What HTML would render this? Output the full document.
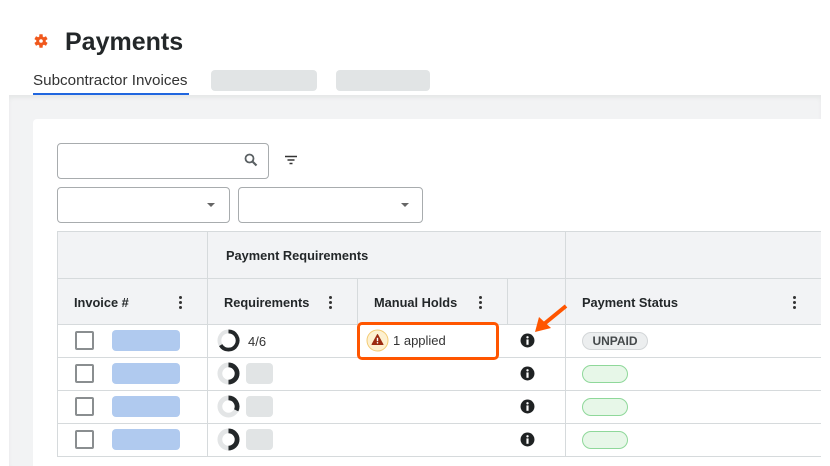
<!DOCTYPE html>
<html><head><style>
*{box-sizing:border-box;margin:0;padding:0}
body{width:830px;height:466px;overflow:hidden;background:#fff;font-family:"Liberation Sans",Arial,sans-serif;color:#232729;position:relative}
.a{position:absolute}
.hd{font-weight:bold;font-size:12.8px;color:#232729}
.dots{position:absolute;width:3px}
.dots i{display:block;width:3px;height:3px;border-radius:50%;background:#333;margin-bottom:2px}
.cb{position:absolute;width:19px;height:19px;border:2px solid #8a8e90;border-radius:2px;background:#fff}
.bp{position:absolute;width:68px;height:21px;background:#b0caef;border-radius:4px}
.gp{position:absolute;width:27px;height:21px;background:#e1e4e5;border-radius:4px}
.gr{position:absolute;width:46px;height:18px;background:#e7f7e8;border:1px solid #8fd89a;border-radius:9px}
.vl{position:absolute;width:1px;background:#d6dadc}
.hl{position:absolute;height:1px;background:#d6dadc}
</style></head><body>
<svg class="a" style="left:34px;top:34px" width="14" height="14" viewBox="0 0 14 14"><g fill="#f0581c"><circle cx="7" cy="7" r="4.8"/><rect x="5.3" y="0.3" width="3.4" height="13.4" rx=".5"/><rect x="5.3" y="0.3" width="3.4" height="13.4" rx=".5" transform="rotate(60 7 7)"/><rect x="5.3" y="0.3" width="3.4" height="13.4" rx=".5" transform="rotate(120 7 7)"/></g><circle cx="7" cy="7" r="1.8" fill="#fff"/></svg>
<div class="a" style="left:65px;top:28px;font-size:25px;font-weight:bold;color:#232729">Payments</div>
<div class="a" style="left:33px;top:72px;font-size:15.2px;color:#333">Subcontractor Invoices</div>
<div class="a" style="left:33px;top:93px;width:156px;height:2px;background:#2066df"></div>
<div class="a" style="left:211px;top:70px;width:106px;height:21px;background:#e1e4e5;border-radius:4px"></div>
<div class="a" style="left:336px;top:70px;width:94px;height:21px;background:#e1e4e5;border-radius:4px"></div>
<div class="a" style="left:9px;top:95px;width:812px;height:371px;background:#f2f3f4;box-shadow:inset 0 3px 4px rgba(0,0,0,.05)"></div>
<div class="a" style="left:33px;top:119px;width:788px;height:347px;background:#fff;border-radius:4px 0 0 0"></div>
<div class="a" style="left:57px;top:143px;width:212px;height:36px;border:1px solid #a8acae;border-radius:4px"></div>
<svg class="a" style="left:244px;top:153px" width="14" height="14" viewBox="0 0 14 14"><circle cx="5.5" cy="5.5" r="4" fill="none" stroke="#5a6063" stroke-width="1.8"/><path d="M8.5 8.5L12.5 12.5" stroke="#5a6063" stroke-width="2.2"/></svg>
<svg class="a" style="left:285px;top:155px" width="12" height="10" viewBox="0 0 12 10"><path d="M0 1.5h12M2.5 5h7M4.5 8.5h3" stroke="#333" stroke-width="1.5"/></svg>
<div class="a" style="left:57px;top:187px;width:173px;height:36px;border:1px solid #a8acae;border-radius:4px"></div>
<div class="a" style="left:207px;top:203px;border:4px solid transparent;border-top:4px solid #666;border-bottom:0;width:0"></div>
<div class="a" style="left:238px;top:187px;width:185px;height:36px;border:1px solid #a8acae;border-radius:4px"></div>
<div class="a" style="left:401px;top:203px;border:4px solid transparent;border-top:4px solid #666;border-bottom:0;width:0"></div>
<div class="a" style="left:57px;top:231px;width:764px;height:93px;background:#f2f3f5"></div>
<div class="hl" style="left:57px;top:231px;width:764px"></div>
<div class="hl" style="left:57px;top:278px;width:764px"></div>
<div class="hl" style="left:57px;top:324px;width:764px"></div>
<div class="hl" style="left:57px;top:357px;width:764px"></div>
<div class="hl" style="left:57px;top:390px;width:764px"></div>
<div class="hl" style="left:57px;top:423px;width:764px"></div>
<div class="hl" style="left:57px;top:456px;width:764px"></div>
<div class="vl" style="left:57px;top:231px;height:226px"></div>
<div class="vl" style="left:207px;top:231px;height:226px"></div>
<div class="vl" style="left:565px;top:231px;height:226px"></div>
<div class="vl" style="left:357px;top:278px;height:46px"></div>
<div class="vl" style="left:507px;top:278px;height:46px"></div>
<div class="hd a" style="left:226px;top:248px">Payment Requirements</div>
<div class="hd a" style="left:74px;top:295px">Invoice #</div>
<div class="dots" style="left:179px;top:296px"><i></i><i></i><i></i></div>
<div class="hd a" style="left:224px;top:295px">Requirements</div>
<div class="dots" style="left:329px;top:296px"><i></i><i></i><i></i></div>
<div class="hd a" style="left:374px;top:295px">Manual Holds</div>
<div class="dots" style="left:479px;top:296px"><i></i><i></i><i></i></div>
<div class="hd a" style="left:582px;top:295px">Payment Status</div>
<div class="dots" style="left:793px;top:296px"><i></i><i></i><i></i></div>
<div class="cb" style="left:75px;top:331px"></div><div class="bp" style="left:112px;top:330px"></div>
<div class="cb" style="left:75px;top:364px"></div><div class="bp" style="left:112px;top:363px"></div>
<div class="cb" style="left:75px;top:397px"></div><div class="bp" style="left:112px;top:396px"></div>
<div class="cb" style="left:75px;top:430px"></div><div class="bp" style="left:112px;top:429px"></div>
<svg class="a" style="left:217px;top:329px" width="23" height="23" viewBox="0 0 24 24"><circle cx="12" cy="12" r="9.5" fill="none" stroke="#e3e5e6" stroke-width="4"/><path d="M12 2.5A9.5 9.5 0 1 1 3.8 16.8" fill="none" stroke="#232729" stroke-width="4"/></svg>
<div class="a" style="left:248px;top:334px;font-size:13px;color:#333">4/6</div>
<svg class="a" style="left:217px;top:362px" width="23" height="23" viewBox="0 0 24 24"><circle cx="12" cy="12" r="9" fill="none" stroke="#e3e5e6" stroke-width="5"/><path d="M12 3A9 9 0 0 1 12 21" fill="none" stroke="#232729" stroke-width="5"/></svg>
<div class="gp" style="left:246px;top:363px"></div>
<svg class="a" style="left:217px;top:395px" width="23" height="23" viewBox="0 0 24 24"><circle cx="12" cy="12" r="9" fill="none" stroke="#e3e5e6" stroke-width="5"/><path d="M12 3A9 9 0 0 1 20 16" fill="none" stroke="#232729" stroke-width="5"/></svg>
<div class="gp" style="left:246px;top:396px"></div>
<svg class="a" style="left:217px;top:428px" width="23" height="23" viewBox="0 0 24 24"><circle cx="12" cy="12" r="9" fill="none" stroke="#e3e5e6" stroke-width="5"/><path d="M12 3A9 9 0 0 1 12 21" fill="none" stroke="#232729" stroke-width="5"/></svg>
<div class="gp" style="left:246px;top:429px"></div>
<div class="a" style="left:357px;top:322px;width:142px;height:38px;border:3px solid #ff5500;border-radius:5px;background:#fff"></div>
<svg class="a" style="left:366px;top:329px" width="23" height="23" viewBox="0 0 23 23"><circle cx="11.5" cy="11.5" r="10.5" fill="#fdf0d0" stroke="#f3cb74" stroke-width="1"/><path d="M11.5 5.5L17 15.5H6Z" fill="#9b2a10" stroke="#9b2a10" stroke-linejoin="round" stroke-width="1"/><path d="M11.5 8.8v3.4" stroke="#fff" stroke-width="1.4"/><circle cx="11.5" cy="13.8" r=".8" fill="#fff"/></svg>
<div class="a" style="left:393px;top:333px;font-size:13px;color:#333">1 applied</div>
<svg class="a" style="left:520px;top:333px" width="15" height="15" viewBox="0 0 14 14"><circle cx="7" cy="7" r="6.5" fill="#1f2223"/><rect x="6" y="6" width="2" height="5" fill="#fff"/><circle cx="7" cy="4" r="1.1" fill="#fff"/></svg>
<svg class="a" style="left:520px;top:366px" width="15" height="15" viewBox="0 0 14 14"><circle cx="7" cy="7" r="6.5" fill="#1f2223"/><rect x="6" y="6" width="2" height="5" fill="#fff"/><circle cx="7" cy="4" r="1.1" fill="#fff"/></svg>
<svg class="a" style="left:520px;top:399px" width="15" height="15" viewBox="0 0 14 14"><circle cx="7" cy="7" r="6.5" fill="#1f2223"/><rect x="6" y="6" width="2" height="5" fill="#fff"/><circle cx="7" cy="4" r="1.1" fill="#fff"/></svg>
<svg class="a" style="left:520px;top:432px" width="15" height="15" viewBox="0 0 14 14"><circle cx="7" cy="7" r="6.5" fill="#1f2223"/><rect x="6" y="6" width="2" height="5" fill="#fff"/><circle cx="7" cy="4" r="1.1" fill="#fff"/></svg>
<svg class="a" style="left:530px;top:300px" width="40" height="36" viewBox="0 0 40 36"><path d="M36 6L14 24" stroke="#ff5500" stroke-width="4"/><path d="M5 32L9 17L21 28Z" fill="#ff5500"/></svg>
<div class="a" style="left:582px;top:332px;width:66px;height:18px;background:#eceeef;border:1px solid #d3d6d8;border-radius:9px;font-size:12px;font-weight:bold;color:#45494b;text-align:center;line-height:16px">UNPAID</div>
<div class="gr" style="left:582px;top:365px"></div>
<div class="gr" style="left:582px;top:398px"></div>
<div class="gr" style="left:582px;top:431px"></div>
</body></html>
